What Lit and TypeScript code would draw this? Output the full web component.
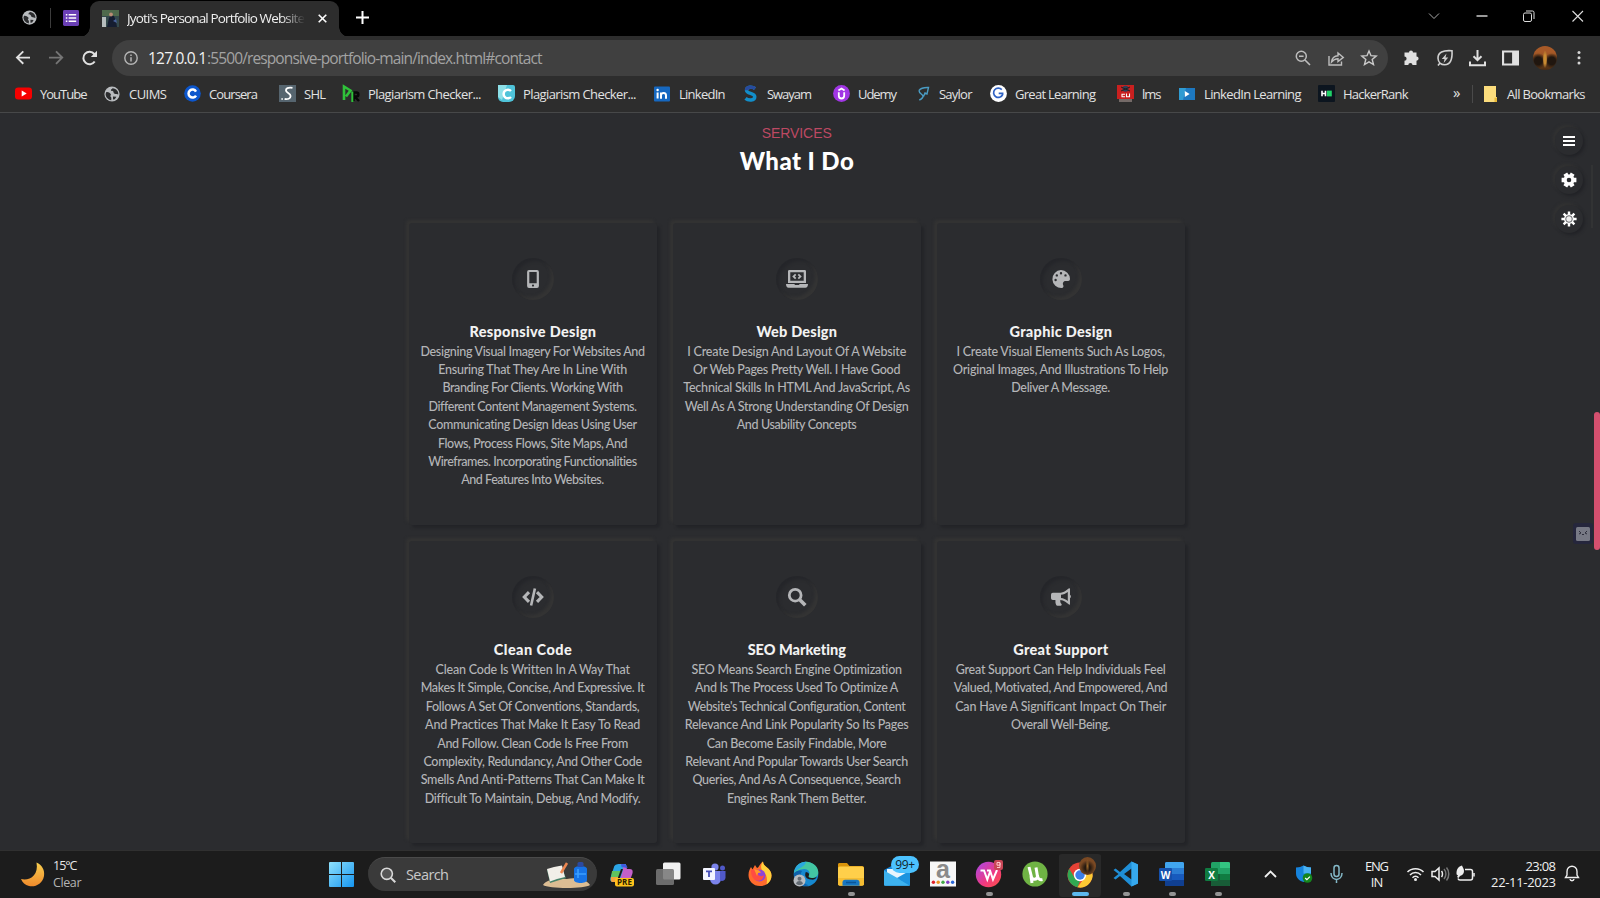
import { LitElement, html, css, svg, TemplateResult } from "lit";
import { customElement, property } from "lit/decorators.js";

/* Text whose tracking is adjusted so that it fills a given width. */
@customElement("fit-text")
class FitText extends LitElement {
  @property() text = "";
  @property({ type: Number }) w = 0;
  static styles = css`
    :host { display: inline-block; white-space: pre; flex: none; }
    .t { display: inline-block; }
  `;
  updated() {
    const el = this.renderRoot.querySelector(".t") as HTMLElement;
    el.style.letterSpacing = "0";
    const natural = el.getBoundingClientRect().width;
    const step = (this.w - natural) / Math.max(1, this.text.length - 1);
    el.style.letterSpacing = step + "px";
    el.style.marginRight = -step + "px";
  }
  render() {
    return html`<span class="t">${this.text}</span>`;
  }
}

const ic = (size: number, box: number, body: unknown, h = size) =>
  html`<svg width=${size} height=${h} viewBox="0 0 ${box} ${box}" preserveAspectRatio="none">${body}</svg>`;

const globe = svg`<circle cx="8" cy="8" r="7.6" fill="#b9bcbf"/><path d="M2.2 6.2c2-.5 3.2.6 4.3 1.6 1 .9.2 1.6-.3 2.3l1.2 1.6-.2 2.6C4 13.700 1.600 11 1.600 8zM8.600 2.200C7.600 3.200 6.700 3.400 7 4.600c.9 1 2.400.1 2.500 1.600.2 1.500 1.700 1.800 3.100 1.800l1.700.5c.3-3-1.900-6-5.700-6.300zM9 10.400l3.400.3-1.600 2.500-1.800.4z" fill="#2b2c2e"/>`;

const bookmarks: [string, number, number, TemplateResult][] = [
  ["YouTube", 89, 47.5, ic(17, 17, svg`<rect y="2.500" width="17" height="12" rx="3.200" fill="#f60000"/><path d="M6.700 5.600v5.800l5-2.900z" fill="#fff"/>`)],
  ["CUIMS", 80, 38, ic(16, 16, globe)],
  ["Coursera", 95, 49, ic(17, 17, svg`<circle cx="8.500" cy="8.500" r="8.300" fill="#0c56cc"/><path d="M12 6.500a4 4 0 1 0 0 4" fill="none" stroke="#fff" stroke-width="2.500"/>`)],
  ["SHL", 64, 22, ic(17, 17, svg`<rect width="17" height="17" fill="#56656f"/><path d="M13.500 2.800C9 2 6.500 3.500 7 5.800c.5 2.200 4.600 2.300 4.600 5.200 0 2.800-3 3.500-6 3M2.500 14h1.200" fill="none" stroke="#fff" stroke-width="1.800"/>`)],
  ["Plagiarism Checker...", 155, 113.5, ic(17, 17, svg`<path d="M1 15V1.500L7.500 5.500 3 11.500" fill="none" stroke="#2fc23a" stroke-width="2.600"/><path d="M10.500 16V7.500h3c2.500 0 2.500 4 0 4h-2l4.500 4.500" fill="none" stroke="#080808" stroke-width="2.400"/><path d="M9.300 6.500V17" stroke="#2fc23a" stroke-width="2"/>`)],
  ["Plagiarism Checker...", 156, 113.5, ic(17, 17, svg`<path d="M2 0h13a2 2 0 0 1 2 2v9a6 6 0 0 1-6 6H5a5 5 0 0 1-5-5V2a2 2 0 0 1 2-2z" fill="#4fc3d9"/><path d="M0 0h9L4 15 0 12z" fill="#8de0e8"/><path d="M13 6A4.300 4.300 0 1 0 13 12" fill="none" stroke="#fff" stroke-width="2.500"/>`)],
  ["LinkedIn", 88, 46.5, ic(16, 16, svg`<rect y=".5" width="16" height="15" rx="1" fill="#1668c0"/><path d="M3.600 6.500v6M7 12.700V6.500M7 9c.5-2.500 5-2.800 5 .5v3.200" fill="none" stroke="#fff" stroke-width="2"/><circle cx="3.600" cy="4" r="1.200" fill="#fff"/>`)],
  ["Swayam", 91, 45, ic(17, 17, svg`<path d="M13 3.600C10.500 1.500 4.500 1.500 4.500 5.200c0 4 8.300 2.500 8.300 6.600 0 4-6.500 4-9.300 1.600" fill="none" stroke="#128ec9" stroke-width="3.400"/><path d="M13 3.600C10.500 1.500 4.500 1.500 4.500 5.200" fill="none" stroke="#284a9c" stroke-width="3.400"/>`)],
  ["Udemy", 81, 39, ic(17, 17, svg`<circle cx="8.500" cy="8.500" r="8.400" fill="#a136e4"/><path d="M5.800 7.200v3.600c0 3.600 5.400 3.600 5.400 0V7.200M5.400 5.400l3.100-1.900 3.100 1.900" fill="none" stroke="#fff" stroke-width="1.800"/>`)],
  ["Saylor", 76, 33.5, ic(17, 17, svg`<path d="M5 5.500c2-2.700 5-3.200 9.500-3L13 9l-2-1-1.500 3.500M5 5.500c0 3 3.500 3.500 4 5.500.3 2-2.200 3.300-3.700 4" fill="none" stroke="#4a9cc4" stroke-width="1.400"/>`)],
  ["Great Learning", 127, 81, ic(17, 17, svg`<circle cx="8.500" cy="8.500" r="8.400" fill="#fff"/><path d="M11.800 4.600a4.700 4.700 0 1 0 .8 5V8.300H8.700" fill="none" stroke="#2f62c4" stroke-width="1.700"/>`)],
  ["lms", 62, 19.5, ic(17, 17, svg`<rect width="17" height="14" fill="#c9201f"/><rect y="14" x="2" width="13" height="3" fill="#746a67"/><circle cx="8.500" cy="3.800" r="3" fill="#32405a"/><path d="M4 2l9 4M13 2L4 6" stroke="#222" stroke-width="1"/><path d="M8 9.200H5v2.600h3M9.500 8.600v3.200h3V8.600" fill="none" stroke="#fff" stroke-width="1.100"/>`)],
  ["LinkedIn Learning", 139, 97.5, ic(16, 16, svg`<rect y="2" width="16" height="12" fill="#1d78c0"/><path d="M0 2h7L4 14H0z" fill="#2f9bd2"/><path d="M5.800 5v6l4.800-3z" fill="#fff"/>`)],
  ["HackerRank", 132, 65.500, ic(17, 17, svg`<rect width="17" height="17" rx="1" fill="#0c151f"/><path d="M4 5.800v5.400M7.500 5.800v5.400M4 8.500h3.500" stroke="#fff" stroke-width="1.600"/><rect x="9" y="5.600" width="4.800" height="5.800" fill="#1fd267"/>`)],
];

const phone = svg`<path fill-rule="evenodd" d="M6 1h8a1.900 1.900 0 0 1 1.900 1.900v14.200A1.900 1.900 0 0 1 14 19H6a1.900 1.900 0 0 1-1.900-1.900V2.900A1.900 1.900 0 0 1 6 1zm.3 1.900v11.300h7.400V2.900zM10 15.500a1.100 1.100 0 1 0 0 2.200 1.100 1.100 0 0 0 0-2.200z"/>`;
const laptop = svg`<path fill-rule="evenodd" d="M3.300 1h15.400c.8 0 1.300.6 1.300 1.300V14H2V2.300C2 1.600 2.500 1 3.300 1zm1 2.200v8.600h13.400V3.200z"/><path d="M0 15h8.500c0 .8.500 1 1 1h3c.5 0 1-.2 1-1H22c0 2.300-1 3.700-2.600 3.700H2.600C1 18.700 0 17.300 0 15z"/><path d="M9.700 5.300 7.500 7.500l2.200 2.200M12.300 5.300l2.200 2.200-2.200 2.200" fill="none" stroke="#b5b6b8" stroke-width="1.800"/>`;
const palette = svg`<path fill-rule="evenodd" d="M10 1a9 9 0 1 0 .8 18c1.600-.2 2-1.700 1.400-3-.9-1.900.4-4 2.500-4h2.500c1 0 1.800-.8 1.800-2A9.200 9.200 0 0 0 10 1zM4.600 9.800a1.200 1.200 0 1 1 0 2.400 1.200 1.200 0 0 1 0-2.400zM5.800 5.200a1.200 1.200 0 1 1 0 2.400 1.200 1.200 0 0 1 0-2.400zM10 3a1.200 1.200 0 1 1 0 2.400A1.200 1.200 0 0 1 10 3zm4.500 2.200a1.200 1.200 0 1 1 0 2.400 1.200 1.200 0 0 1 0-2.400z"/>`;
const code = svg`<path d="M7 5.200 2.300 10 7 14.800M15 5.200l4.700 4.800-4.700 4.800" fill="none" stroke="#b5b6b8" stroke-width="3.100"/><path d="M12.900 1.500 9.100 18.500" stroke="#b5b6b8" stroke-width="2.600"/>`;
const lens = svg`<circle cx="8.200" cy="8.200" r="5.900" fill="none" stroke="#b5b6b8" stroke-width="2.800"/><path d="m12.500 12.500 5.800 5.800" stroke="#b5b6b8" stroke-width="3.600"/>`;
const horn = svg`<path fill-rule="evenodd" d="M19 1.200c.6-.2 1 0 1 .7v5.800c1.200.6 1.200 2.900 0 3.500v5.900c0 .7-.4.900-1 .5l-3.700-2.900a10 10 0 0 0-5-1.700c-.2 2 .3 3.200 1.200 4.100.5.700.1 1.700-.8 1.700H7.400c-.6 0-1-.2-1.200-.7A11 11 0 0 1 5.400 13H2.800A1.900 1.900 0 0 1 1 11.200V7.700a1.900 1.900 0 0 1 1.800-1.900H9c2.600 0 4.700-.6 6.300-1.800zM17.800 5c-2.200 1.700-4.400 2.500-6.800 2.800v3.300c2.400.3 4.600 1.200 6.800 2.900z"/>`;

type Line = [string, number];
const services: { title: Line; icon: unknown; wide: number; lines: Line[] }[] = [
  { title: ["Responsive Design", 126.5], icon: phone, wide: 20, lines: [["Designing Visual Imagery For Websites And", 224.5], ["Ensuring That They Are In Line With", 189], ["Branding For Clients. Working With", 180.5], ["Different Content Management Systems.", 208], ["Communicating Design Ideas Using User", 209], ["Flows, Process Flows, Site Maps, And", 189.5], ["Wireframes. Incorporating Functionalities", 209.5], ["And Features Into Websites.", 143]] },
  { title: ["Web Design", 80.5], icon: laptop, wide: 22, lines: [["I Create Design And Layout Of A Website", 219], ["Or Web Pages Pretty Well. I Have Good", 207], ["Technical Skills In HTML And JavaScript, As", 227], ["Well As A Strong Understanding Of Design", 224], ["And Usability Concepts", 120]] },
  { title: ["Graphic Design", 102.5], icon: palette, wide: 20, lines: [["I Create Visual Elements Such As Logos,", 208.5], ["Original Images, And Illustrations To Help", 215.5], ["Deliver A Message.", 99]] },
  { title: ["Clean Code", 78], icon: code, wide: 22, lines: [["Clean Code Is Written In A Way That", 194], ["Makes It Simple, Concise, And Expressive. It", 224], ["Follows A Set Of Conventions, Standards,", 214], ["And Practices That Make It Easy To Read", 215.5], ["And Follow. Clean Code Is Free From", 191], ["Complexity, Redundancy, And Other Code", 218.5], ["Smells And Anti-Patterns That Can Make It", 224], ["Difficult To Maintain, Debug, And Modify.", 215.5]] },
  { title: ["SEO Marketing", 98.5], icon: lens, wide: 20, lines: [["SEO Means Search Engine Optimization", 211], ["And Is The Process Used To Optimize A", 203.5], ["Website's Technical Configuration, Content", 218], ["Relevance And Link Popularity So Its Pages", 224], ["Can Become Easily Findable, More", 180], ["Relevant And Popular Towards User Search", 223], ["Queries, And As A Consequence, Search", 208.5], ["Engines Rank Them Better.", 139]] },
  { title: ["Great Support", 95], icon: horn, wide: 21, lines: [["Great Support Can Help Individuals Feel", 210], ["Valued, Motivated, And Empowered, And", 214], ["Can Have A Significant Impact On Their", 211], ["Overall Well-Being.", 99.5]] },
];

/* Cog outline with n teeth, r1 at the root and r2 at the tip. */
const gearPath = (n: number, r1: number, r2: number, a: number) => {
  let d = "";
  for (let i = 0; i < n; i++) {
    const t = (i * 2 * Math.PI) / n - Math.PI / 2 + (n === 6 ? Math.PI / 6 : 0);
    const p = (r: number, x: number) => `${(8 + r * Math.cos(t + x)).toFixed(2)} ${(8 + r * Math.sin(t + x)).toFixed(2)}`;
    d += `${i ? "L" : "M"}${p(r1, -a * 1.5)}L${p(r2, -a)}L${p(r2, a)}L${p(r1, a * 1.5)}`;
  }
  return d + "Z";
};

const apps: { icon: TemplateResult; mark?: string; active?: boolean }[] = [
  { icon: html`<svg width="26" height="26" viewBox="0 0 26 26"><path d="M11 3h6l-4 14c-.8 2.800-2 4-5 4H4c-3 0-3-3-2.300-5L5 6c.7-2 2-3 6-3z" fill="#2ba5e6"/><path d="M3 10h9l-2 7H2z" fill="#62c25d"/><path d="M14 3c3 0 3 2 4 5h3c3 0 3 3 2.300 5L21 19H11l3-10c.7-3-1-6-4-6z" fill="#c360c9"/><path d="M12 3h3c2 0 3 2 3.500 4l-6-1z" fill="#3c5be0"/><path d="M12 8h2l-3.500 10H8.500z" fill="#1c1c1c"/><path d="M2 16h7l-1 5H4c-2.500 0-2.500-2-2-5z" fill="#f3a33e"/><rect x="6" y="17" width="19" height="8.500" rx="2" fill="#ffc31b"/><text x="15.500" y="24.300" text-anchor="middle" class="pre">PRE</text></svg>` },
  { icon: html`<svg width="26" height="26" viewBox="0 0 26 26"><rect x="8" y="1.500" width="17.500" height="17" rx="1.500" fill="#f1f1f1"/><rect x="1" y="8" width="18" height="16" rx="1.500" fill="#777" fill-opacity=".88"/></svg>` },
  { icon: html`<svg width="24" height="24" viewBox="0 0 24 24"><circle cx="13" cy="5" r="3.600" fill="#7b83eb"/><circle cx="20.500" cy="6" r="2.500" fill="#5059c9"/><path d="M8 9h11v8a5.500 5.500 0 0 1-11 0z" fill="#7b83eb"/><path d="M18 9h5.500v6.500c0 3-3 4-5.500 3z" fill="#5059c9"/><rect x="1" y="6" width="12" height="12" rx="1" fill="#f4f5ff"/><path d="M4 9.300h6M7 9.300V15" stroke="#464eb8" stroke-width="1.800"/></svg>` },
  { icon: html`<svg width="26" height="26" viewBox="0 0 26 26"><path d="M13 25C6 25 1.500 20 1.500 14c0-4 1.500-6 2.500-8l1.500 2.500L8 4l2 3c2 0 3-5 6-6.500 0 3 2 4 4 6 2.500 2 4.500 4.500 4.500 8C24.500 20.500 19.500 25 13 25z" fill="#ff6b2d"/><path d="M16 .5c0 3 2 4 4 6 2.500 2 4.500 4.500 4.500 8 0 4-2 7-5 9 1-6 .5-10-3.500-13-2-2-3-6 0-10z" fill="#ffd13b"/><circle cx="12.500" cy="14.500" r="6" fill="#8d45d8"/><path d="M4 9c4-2 8 0 10 2-3 0-4 2-2 3.500 2 1.200 4 .5 5-.5-.5 4-3.500 6.500-7 5.500C5.500 18.500 4 14 4 9z" fill="#ff4d42"/><path d="M7 8l5 1.500 2 2-3 .5-1 3z" fill="#ff9b28"/></svg>` },
  { icon: html`<svg width="26" height="26" viewBox="0 0 26 26"><circle cx="13" cy="13" r="12.300" fill="#1688cf"/><path d="M1 12C2 4 8 .7 13 .7 20 .7 25.300 6 25.300 11c0 4-3 6-6.500 6-3 0-3.800-1.300-3-2.500C18 11 15 8 11.500 8 6 8 3 11 1 12z" fill="#43c6a2"/><path d="M1 12C2 4 8 .7 13 .7c-1 6-9 6-12 11.300z" fill="#2aa8df"/><path d="M15.800 14.500c-.8 1.200 0 2.500 3 2.500 2 0 4-.7 5-1.600-1 3-3 3.500-6 3.200-4-.5-7-3-5-7.600 2.500.2 4 2 3 3.500z" fill="#1c1c1c"/><path d="M9 10c-3 4-1 12 7 14.500-9 2.500-16-5-15-12C3 10 6 9 9 10z" fill="#0d62ac"/><circle cx="6.500" cy="19.500" r="6" fill="#b7bbc0"/><circle cx="6.500" cy="17.700" r="2" fill="#626a72"/><path d="M3 22.500c1-3.300 6-3.300 7 0-2 2-5 2-7 0z" fill="#626a72"/></svg>` },
  { mark: "dot", icon: html`<svg width="26" height="26" viewBox="0 0 26 26"><path d="M0 3.500C0 2.500.7 2 1.500 2H9l2.500 3H24c1.300 0 2 .7 2 2v4H0z" fill="#d9940b"/><rect y="5.500" width="26" height="19" rx="1.800" fill="#ffcf4a"/><path d="M0 17h26v6c0 1-.8 1.700-1.800 1.700H1.800C.8 24.700 0 24 0 23z" fill="#f6bd32"/><path d="M4.500 24.700v-3.500c0-1.500 1-2.500 2.500-2.500h12c1.500 0 2.500 1 2.500 2.500v3.500z" fill="#1777c2"/><path d="M8 21.500h10" stroke="#0b5596" stroke-width="1.500"/></svg>` },
  { icon: html`<span class="mail"><svg width="26" height="26" viewBox="0 0 26 26"><path d="M0 9l13-7 13 7v14.500c0 .8-.7 1.300-1.500 1.300h-23C.7 24.800 0 24.300 0 23.500z" fill="#1783d4"/><path d="M3 8h20v7L13 20 3 15z" fill="#e8f5fd"/><path d="M0 9.500 26 24c-.2.500-.8.800-1.500.8h-23C.7 24.800 0 24.300 0 23.500z" fill="#3db2ef"/><path d="M26 9.500 13 17l12.500 7.500c.3-.2.500-.600.5-1z" fill="#1c93df"/></svg><span class="badge"><fit-text text="99+" w="20"></fit-text></span></span>` },
  { icon: html`<svg width="26" height="26" viewBox="0 0 26 26"><rect y=".5" width="26" height="25" fill="#f7f7f7"/><text x="13" y="16.500" text-anchor="middle" class="avro">a</text><g><circle cx="3.400" cy="21.300" r="1.700" fill="#e2232b"/><circle cx="8.200" cy="21.300" r="1.700" fill="#f29420"/><circle cx="13" cy="21.300" r="1.700" fill="#42a747"/><circle cx="17.800" cy="21.300" r="1.700" fill="#813dc4"/><circle cx="22.600" cy="21.300" r="1.700" fill="#2866d8"/></g></svg>` },
  { mark: "dot", icon: html`<svg width="28" height="28" viewBox="0 0 28 28"><defs><linearGradient id="wp" x1="0" x2="1" y2="1"><stop offset="0" stop-color="#a748ec"/><stop offset=".6" stop-color="#f1397e"/><stop offset="1" stop-color="#ff5443"/></linearGradient></defs><circle cx="13.500" cy="14.500" r="12.700" fill="url(#wp)"/><path d="M5.500 10.500H9l3.300 9 3-8.500M12 10.500h3l3 9 4-9.500" fill="none" stroke="#fff" stroke-width="2"/><rect x="19" y="0" width="9" height="10" rx="2" fill="#c84656"/><path d="M22 2.500h3v2.700h-3zM25 3v4.500h-3" fill="none" stroke="#ffc7cb" stroke-width="1"/></svg>` },
  { icon: html`<svg width="26" height="26" viewBox="0 0 26 26"><circle cx="13" cy="13" r="12.600" fill="#6fb344"/><path d="M7 6l2.500 10c.6 3 5.500 3 6-.5L14 6.500M15.500 15c1 4 3 4 5 3.500M9 15l1 7" fill="none" stroke="#fff" stroke-width="3"/></svg>` },
  { mark: "bar", active: true, icon: html`<span class="mail"><svg width="26" height="26" viewBox="0 0 26 26"><circle cx="13" cy="13" r="12.500" fill="#e64236"/><path d="M2.200 6.800 8 16.500l5 2.500-2.500 6.200A12.500 12.500 0 0 1 2.200 6.800z" fill="#31a852"/><path d="M13 7h11a12.500 12.500 0 0 1-13.500 18.300L18 15z" fill="#fcc934"/><circle cx="13" cy="13" r="6.200" fill="#fff"/><circle cx="13" cy="13" r="4.700" fill="#3c7fe9"/></svg><span class="mini"></span></span>` },
  { mark: "dot", icon: html`<svg width="26" height="26" viewBox="0 0 26 26"><path d="M18.500.5 25 3.500v19l-6.500 3L7 15l-4.500 3.500L.5 17l5-4-5-4 2-1.500L7 11zM18.500 7.500 11 13l7.500 5.500z" fill="#1f8ed6" fill-rule="evenodd"/><path d="M18.500.5 25 3.500v19l-6.500 3z" fill="#36a9ee"/></svg>` },
  { mark: "dot", icon: html`<svg width="26" height="26" viewBox="0 0 26 26"><rect x="6" y="1" width="19" height="24" rx="1.500" fill="#185abd"/><path d="M6 2.500A1.500 1.500 0 0 1 7.500 1h16A1.500 1.500 0 0 1 25 2.500V7H6z" fill="#41a5ee"/><path d="M6 7h19v6H6z" fill="#2b7cd3"/><path d="M6 19h19v4.500a1.500 1.500 0 0 1-1.500 1.500h-16A1.500 1.500 0 0 1 6 23.500z" fill="#103f91"/><rect y="7" width="13" height="13" rx="1.300" fill="#1550ac"/><text x="6.500" y="17.500" text-anchor="middle" class="office">W</text></svg>` },
  { mark: "dot", icon: html`<svg width="26" height="26" viewBox="0 0 26 26"><rect x="6" y="1" width="19" height="24" rx="1.500" fill="#21a366"/><path d="M15 1h8.500A1.500 1.500 0 0 1 25 2.500V7H15z" fill="#33c481"/><path d="M6 13h9v12H7.500A1.500 1.500 0 0 1 6 23.500zM15 19h10v4.500a1.500 1.500 0 0 1-1.500 1.500H15z" fill="#185c37"/><path d="M15 13h10v6H15z" fill="#107c41"/><rect y="7" width="13" height="13" rx="1.300" fill="#107c41"/><text x="6.500" y="17.500" text-anchor="middle" class="office">X</text></svg>` },
];

@customElement("app-root")
class AppRoot extends LitElement {
  static styles = css`
    :host { display: flex; flex-direction: column; width: 1600px; height: 898px; overflow: hidden; position: relative; background: #2b2c2f; color: #e6e6e6; font-family: "Open Sans", "Noto Sans", sans-serif; }
    * { box-sizing: border-box; }
    svg { display: block; flex: none; overflow: visible; }
    .strip { height: 36px; flex: none; background: #000; display: flex; align-items: center; padding-bottom: 1px; }
    .pin { display: flex; align-items: center; padding-left: 21.500px; width: 90px; }
    .sep { width: 1px; height: 20px; background: #3c3c3c; margin: 0 12px 0 13px; }
    .tab { width: 249px; height: 36px; background: #2d2d2d; border-radius: 9px 9px 0 0; display: flex; align-items: center; padding: 0 0 1px 12px; position: relative; top: 1px; font-size: 13.5px; color: #f0f0f0; }
    .tab::before, .tab::after { content: ""; position: absolute; bottom: 0; width: 10px; height: 10px; }
    .tab::before { left: -10px; background: radial-gradient(circle at 0 0, transparent 9.500px, #2d2d2d 10px); }
    .tab::after { right: -10px; background: radial-gradient(circle at 100% 0, transparent 9.500px, #2d2d2d 10px); }
    .cap { margin-left: 8px; width: 178px; overflow: hidden; white-space: nowrap; -webkit-mask-image: linear-gradient(90deg, #000 87%, transparent 100%); }
    .close { margin-left: 13px; }
    .plus { margin-left: 17px; }
    .win { margin-left: auto; display: flex; align-items: center; padding: 0 17.500px 4px 0; }
    .bar { height: 44px; flex: none; background: #2d2d2d; display: flex; align-items: center; padding-left: 15px; }
    .nav { display: flex; gap: 17px; width: 97px; }
    .omni { width: 1276px; height: 36px; border-radius: 18px; background: #404040; display: flex; align-items: center; padding: 0 10px 0 12px; font-size: 15.5px; color: #a3a3a3; }
    .url { display: flex; margin-left: 10px; flex: 1; }
    .host { color: #f2f2f2; }
    .acts { display: flex; gap: 15px; align-items: center; }
    .ext { display: flex; align-items: center; margin-left: 14px; gap: 15.500px; }
    .face { width: 24px; height: 24px; border-radius: 50%; margin: 0 -2.500px 0 -1.500px; background: radial-gradient(ellipse 2.500px 9px at 50% 55%, #c98b32 0 50%, transparent 100%), radial-gradient(circle at 22% 62%, #20160f 0 16%, transparent 32%), radial-gradient(circle at 78% 62%, #20160f 0 16%, transparent 32%), linear-gradient(#a85a28 25%, #7a461d 60%, #4b2d14); }
    .marks { height: 33px; flex: none; background: #2d2d2d; border-bottom: 1px solid #474849; display: flex; align-items: center; padding: 0 0 5px 15px; font-size: 13px; color: #e2e2e2; }
    .mark { display: flex; align-items: center; flex: none; }
    .mi { width: 25px; flex: none; }
    .more { width: 22px; padding-left: 3px; font-size: 15px; line-height: 14px; margin-top: -4px; }
    .vs { width: 1px; height: 18px; background: #4a4a4a; margin-right: 11px; }
    .folder { width: 23px; }
    .page { height: 737px; flex: none; display: flex; flex-direction: column; align-items: center; background: #2b2c2f; padding-right: 6.500px; overflow: hidden; }
    .eyebrow { margin-top: 12px; height: 17px; font: 14px/17px "Liberation Sans", sans-serif; color: #bd4963; }
    .h { height: 34px; font: 900 24px/38px Lato, sans-serif; color: #fff; margin-bottom: 46.500px; }
    .grid { display: grid; grid-template-columns: repeat(3, 248px); grid-auto-rows: 302px; gap: 16.500px 16px; }
    .card { border-radius: 3px; padding-top: 35px; display: flex; flex-direction: column; align-items: center; box-shadow: 3px 3px 3px #232428, -3px -3px 3px #333; background: #2b2c2f; }
    .ring { width: 42px; height: 42px; border-radius: 50%; display: grid; place-items: center; box-shadow: inset 3px 3px 3px #25262a, inset -3px -3px 3px #343434; fill: #b5b6b8; }
    .title { margin-top: 22px; height: 21px; font: 900 14.500px/20px Lato, sans-serif; color: #f2f2f2; }
    .desc { font: 500 12.500px/18.400px Lato, sans-serif; color: #b4b5b7; display: flex; flex-direction: column; align-items: center; }
    .side { position: absolute; right: 17px; top: 127px; display: flex; flex-direction: column; gap: 11px; }
    .btn { width: 28px; height: 28px; border-radius: 50%; display: grid; place-items: center; background: #2b2c2f; box-shadow: 2px 2px 3px #222327, -2px -2px 3px #323232; }
    .line { position: absolute; left: 1591px; top: 165px; width: 2px; height: 63px; background: #323334; }
    .thumb { position: absolute; right: 0; top: 412px; width: 6px; height: 138px; border-radius: 3px; background: #d5506f; }
    .widget { position: absolute; left: 1573px; top: 523px; width: 20px; height: 21px; border-radius: 3px; background: #25263c; display: grid; place-items: center; }
    .task { height: 48px; flex: none; background: #1c1c1c; border-top: 1px solid #303030; display: flex; align-items: center; padding-bottom: 1px; }
    .weather { width: 307px; padding-left: 21px; display: flex; align-items: center; gap: 8px; font-size: 12.500px; line-height: 17px; flex: none; }
    .two { display: flex; flex-direction: column; }
    .dim { color: #b4b4b4; }
    .start { margin-left: 22px; width: 39px; }
    .search { width: 229px; height: 34px; border-radius: 17px; background: #3a3a3a; border-top: 1px solid #4a4a4a; display: flex; align-items: center; padding: 0 7px 0 12px; font-size: 14.500px; color: #c9c9c9; flex: none; }
    .search fit-text { margin: 0 auto 0 10px; }
    .apps { display: flex; margin-left: 2.500px; }
    .app { width: 45.800px; height: 47px; display: grid; place-items: center; position: relative; }
    .app.on { background: #292929; background-clip: content-box; padding: 3px 2px 1px; border-radius: 5px; }
    .dot, .bar2 { position: absolute; bottom: 2px; left: 20px; width: 7px; height: 3.500px; border-radius: 2px; background: #949494; }
    .bar2 { width: 17px; left: 14.500px; background: #5cb8ee; }
    .mail { position: relative; display: block; }
    .badge { position: absolute; left: 7px; top: -5px; width: 28px; height: 17px; border-radius: 9px; background: #4cc2ff; color: #10222e; font-size: 12px; line-height: 17px; text-align: center; }
    .mini { position: absolute; left: 12px; top: -5px; width: 17px; height: 18px; border-radius: 50%; background: radial-gradient(ellipse 2px 7px at 50% 50%, #a06a2a, transparent), radial-gradient(circle at 50% 60%, #251910 0 20%, transparent 55%), #7b4923; }
    .pre { font: 700 8px "Open Sans", sans-serif; fill: #2a2100; }
    .avro { font: 700 25px "Liberation Sans", sans-serif; fill: #8a8a8a; }
    .office { font: 700 10px "Open Sans", sans-serif; fill: #fff; }
    .tray { margin-left: auto; display: flex; align-items: center; padding-right: 20px; font-size: 13px; line-height: 16.500px; color: #f0f0f0; }
    .lang { align-items: center; width: 24px; margin: 0 17px 0 15px; }
    .clock { align-items: flex-end; margin: 0 8px 0 17px; width: 65px; }
  `;

  render() {
    return html`
      <div class="strip">
        <div class="pin">
          ${ic(15, 16, globe)}<span class="sep"></span>
          ${ic(16, 17, svg`<rect width="17" height="17" rx="1.500" fill="#6a3fb5"/><path d="M6 5h8M6 8.500h8M6 12h8" stroke="#fff" stroke-width="1.600"/><path d="M3 5h1.600M3 8.500h1.600M3 12h1.600" stroke="#fff" stroke-width="1.600"/>`)}
        </div>
        <div class="tab">
          ${ic(17, 17, svg`<rect width="17" height="17" fill="#34494c"/><path d="M0 0h17v6H0z" fill="#4f6a4c"/><path d="M0 7h4v10H0z" fill="#b6bdbd"/><path d="M5 17l2-9 2-3 3 1 2 5 1 6z" fill="#151d31"/><circle cx="9" cy="4.500" r="1.900" fill="#b98c74"/><path d="M11 11l3-2 1 4z" fill="#48619a"/>`)}
          <span class="cap"><fit-text text="Jyoti's Personal Portfolio Website" w="178"></fit-text></span>
          <span class="close">${ic(9, 9, svg`<path d="M.7.7l7.600 7.600M8.300.7.7 8.300" stroke="#fff" stroke-width="1.600"/>`)}</span>
        </div>
        <span class="plus">${ic(13, 13, svg`<path d="M6.500 0v13M0 6.500h13" stroke="#fff" stroke-width="2"/>`)}</span>
        <div class="win">
          <svg width="160" height="12" viewBox="0 0 160 12"><path d="M6 3.500l5 5 5-5" fill="none" stroke="#aaa" stroke-width="1"/><path d="M53.500 6h11" stroke="#fff" stroke-width="1.200"/><rect x="100.500" y="3" width="8" height="8.500" rx="1.500" fill="none" stroke="#ddd"/><path d="M103 1h6.500A1.500 1.500 0 0 1 111 2.500V9" fill="none" stroke="#ddd"/><path d="M149.500 1l10.500 10.500M160 1l-10.500 10.500" stroke="#ddd" stroke-width="1.100"/></svg>
        </div>
      </div>

      <div class="bar">
        <div class="nav">
          ${ic(16, 16, svg`<path d="M15 7.600H2.200M8.300 1.400 2 7.600l6.300 6.200" fill="none" stroke="#e0e0e0" stroke-width="1.900"/>`)}
          ${ic(16, 16, svg`<path d="M1 7.600h13M8 1.400l6.200 6.200L8 13.800" fill="none" stroke="#757575" stroke-width="1.900"/>`)}
          ${ic(16, 16, svg`<path d="M13.700 11.500A6.200 6.200 0 1 1 13.300 4l1.500 1.600" fill="none" stroke="#e0e0e0" stroke-width="2"/><path d="M16 .8v6.300H9.800z" fill="#e0e0e0"/>`)}
        </div>
        <div class="omni">
          ${ic(14, 14, svg`<circle cx="7" cy="7" r="6.200" fill="none" stroke="#b5b5b5" stroke-width="1.400"/><path d="M7 6.200v4.200M7 3.500v1.400" stroke="#b5b5b5" stroke-width="1.500"/>`)}
          <span class="url"><fit-text class="host" text="127.0.0.1" w="59"></fit-text><fit-text text=":5500/responsive-portfolio-main/index.html#contact" w="335.500"></fit-text></span>
          <span class="acts">
            ${ic(18, 18, svg`<circle cx="7.300" cy="7.300" r="5" fill="none" stroke="#bdbdbd" stroke-width="1.500"/><path d="M11 11l5 5M5 7.300h4.600" stroke="#bdbdbd" stroke-width="1.600"/>`)}
            ${ic(18, 18, svg`<path d="M2 7v9h12.500v-3.500M4.500 13c.5-4 3-6 6.500-6.200V4l5.300 4.400L11 12.500V9.700C8.500 9.700 6.500 10.500 4.500 13z" fill="none" stroke="#bdbdbd" stroke-width="1.400"/>`)}
            ${ic(18, 18, svg`<path d="M9 2l2 4.700 5.200.4-4 3.400 1.300 5L9 12.800l-4.500 2.700 1.300-5-4-3.400L7 6.700z" fill="none" stroke="#cacaca" stroke-width="1.400"/>`)}
          </span>
        </div>
        <div class="ext">
          ${ic(18, 18, svg`<path d="M7 3.500a2 2 0 0 1 4 0h3.500V7.500a2 2 0 0 1 0 4.200V16h-4a2 2 0 0 0-4.200 0H2.500v-4.200a2 2 0 0 0 0-4.200V3.500z" fill="#e0e0e0"/>`)}
          ${ic(18, 18, svg`<path d="M16 1.800C7 1 1.800 3.500 2 9.300c.2 4 3 6.500 6.700 6.500C14.500 15.800 16.500 10 16 1.800zM4 14l-2 2.500" fill="none" stroke="#d0d0d0" stroke-width="1.600"/><path d="M10.500 4.500 5.800 10h2.700l-.8 4 4.500-5.500H9.500z" fill="#d0d0d0"/>`)}
          ${ic(17, 17, svg`<path d="M8.500 0v9.500M4.500 6.200l4 4 4-4M1 11.500v3.800h15v-3.800" fill="none" stroke="#e0e0e0" stroke-width="2"/>`)}
          ${ic(17, 16, svg`<rect x="1" y="1.500" width="14" height="13" fill="none" stroke="#e0e0e0" stroke-width="2"/><path d="M9.500 1h6v14h-6z" fill="#e0e0e0"/>`, 16)}
          <span class="face"></span>
          <svg width="18" height="18" viewBox="0 0 18 18" fill="#d6d6d6"><circle cx="9" cy="3.500" r="1.500"/><circle cx="9" cy="8.800" r="1.500"/><circle cx="9" cy="14.100" r="1.500"/></svg>
        </div>
      </div>

      <div class="marks">
        ${bookmarks.map(([label, span, w, icon]) => html`<div class="mark" style="width:${span}px"><span class="mi">${icon}</span><fit-text text=${label} w=${w}></fit-text></div>`)}
        <span class="more">»</span><span class="vs"></span>
        <span class="folder">${ic(13, 13, svg`<path d="M0 0h12v9h1v4H0z" fill="#fbdc7c"/><path d="M10.500 13v-3.500H13V13z" fill="#e8b837"/>`, 16)}</span>
        <fit-text text="All Bookmarks" w="78.500"></fit-text>
      </div>

      <div class="page">
        <div class="eyebrow"><fit-text text="SERVICES" w="70"></fit-text></div>
        <div class="h"><fit-text text="What I Do" w="114"></fit-text></div>
        <div class="grid">
          ${services.map((s) => html`<div class="card">
            <div class="ring"><svg width=${s.wide} height="20" viewBox="0 0 ${s.wide} 20">${s.icon}</svg></div>
            <div class="title"><fit-text text=${s.title[0]} w=${s.title[1]}></fit-text></div>
            <div class="desc">${s.lines.map(([t, w]) => html`<fit-text text=${t} w=${w}></fit-text>`)}</div>
          </div>`)}
        </div>
      </div>

      <div class="task">
        <div class="weather">
          <svg width="24" height="25" viewBox="0 0 24 25"><defs><linearGradient id="mn" x2="0" y2="1"><stop offset="0" stop-color="#f8cf4f"/><stop offset="1" stop-color="#f08a2c"/></linearGradient></defs><path d="M15.500.5C21 3 24 8 23 14c-1.500 8-9 11.500-15 10-4-1-6.500-3.500-8-7 8 2 18-3 15.500-16.500z" fill="url(#mn)"/></svg>
          <span class="two"><fit-text text="15°C" w="24.500"></fit-text><fit-text class="dim" text="Clear" w="28.500"></fit-text></span>
        </div>
        <span class="start"><svg width="25" height="25" viewBox="0 0 25 25"><defs><linearGradient id="ws" x2="1" y2="1"><stop offset="0" stop-color="#8fe1fc"/><stop offset="1" stop-color="#1595f0"/></linearGradient></defs><path d="M1 0h11v12H0V1a1 1 0 0 1 1-1zM13 0h11a1 1 0 0 1 1 1v11H13zM0 13h12v12H1a1 1 0 0 1-1-1zM13 13h12v11a1 1 0 0 1-1 1H13z" fill="url(#ws)"/></svg></span>
        <div class="search">
          ${ic(16, 16, svg`<circle cx="6.800" cy="6.800" r="5.600" fill="#555" stroke="#d8d8d8" stroke-width="1.600"/><path d="m10.800 10.800 4.500 4.500" stroke="#d8d8d8" stroke-width="2"/>`)}
          <fit-text text="Search" w="43"></fit-text>
          <svg width="47" height="28" viewBox="0 0 47 28"><path d="M0 24c3-5 12-7 24-6 10-2 20 1 23 6-5 4-41 4-47 0z" fill="#dcbd93"/><path d="M4 9l14-4 5 12L7 22z" fill="#47836a"/><path d="M4 8l7-2 3 12-7 2.500zM11 6l8-1.500L22 16l-8 2z" fill="#f2efe9"/><path d="M24 2l-6 10" stroke="#ed8750" stroke-width="2.500"/><path d="M31 8c0-4 13-4 13 0v11c0 4-13 4-13 0z" fill="#1673e6"/><rect x="34.500" y="1" width="6" height="5" rx="1.500" fill="#2b4aa1"/><path d="M32 13h11M35 8v9" stroke="#3ba0ff" stroke-width="1.600"/></svg>
        </div>
        <div class="apps">
          ${apps.map((a) => html`<div class="app ${a.active ? "on" : ""}">${a.icon}${a.mark ? html`<span class=${a.mark === "bar" ? "bar2" : "dot"}></span>` : ""}</div>`)}
        </div>
        <div class="tray">
          <svg width="90" height="22" viewBox="0 0 90 22"><path d="M5 14l5.500-5.500L16 14" fill="none" stroke="#f0f0f0" stroke-width="1.800"/><path d="M36 4.500c3.500 0 5-.7 7.500-2 2.500 1.300 4 2 7.500 2v6c0 5-4 7.500-7.500 8.500-3.500-1-7.500-3.500-7.500-8.500z" fill="#1683dc"/><path d="M43.500 2.500c2.500 1.300 4 2 7.500 2v6h-7.500z" fill="#49b2f2"/><circle cx="47.500" cy="15" r="4.800" fill="#15851d"/><path d="M45.200 15l1.700 1.700 3-3" fill="none" stroke="#fff" stroke-width="1.200"/><rect x="74" y="2.500" width="5" height="11" rx="2.500" fill="none" stroke="#84b9c8" stroke-width="1.500"/><path d="M71 10c0 8.500 11 8.500 11 0M76.500 16.500V20" fill="none" stroke="#84b9c8" stroke-width="1.500"/></svg>
          <div class="two lang"><fit-text text="ENG" w="24"></fit-text><fit-text text="IN" w="12.500"></fit-text></div>
          <svg width="68" height="20" viewBox="0 0 68 20"><g fill="none" stroke="#eee" stroke-width="1.500"><path d="M1.500 8c4-4.500 12-4.500 16 0M4 11c3-3.400 8-3.400 11 0M6.500 13.700c1.800-2 4.200-2 6 0"/><path d="M26 7.500h3l4-3.500v12l-4-3.500h-3z"/><path d="M35.500 7c1.300 1.500 1.300 4.500 0 6"/><path d="M38 5c2.500 2.700 2.500 7.300 0 10M40.500 3.500c3 3.500 3 9.500 0 13" stroke="#777"/><path d="M59 5.500h5.500a2 2 0 0 1 2 2v6.500a2 2 0 0 1-2 2H54a2 2 0 0 1-2-1.500"/><path d="M68 9v3.500"/></g><circle cx="9.500" cy="15.500" r="1.500" fill="#eee"/><path d="M50.500 9.500C50.500 5 52.500 2.500 56 1.500c.5 1.500 2 3 2 5.500s-1.500 4.500-4 5l-1.500 2-1.500-1 1-1.500c-1-.5-1.500-1-1.500-2z" fill="#eee"/></svg>
          <div class="two clock"><fit-text text="23:08" w="30.500"></fit-text><fit-text text="22-11-2023" w="65"></fit-text></div>
          <svg width="16" height="18" viewBox="0 0 16 18"><path d="M1.500 12.500h13L13 10V6.500C13 -.5 3 -.5 3 6.500V10zM6 14c.3 2.300 3.700 2.300 4 0" fill="none" stroke="#eee" stroke-width="1.400"/></svg>
        </div>
      </div>

      <div class="side">
        <div class="btn">${ic(12, 12, svg`<path d="M0 2h12M0 6h12M0 10h12" stroke="#fff" stroke-width="2.100"/>`)}</div>
        <div class="btn">${ic(16, 16, svg`<path d="${gearPath(6, 5.5, 7.7, 0.28)}M8 5.700a2.300 2.300 0 1 0 0 4.600 2.300 2.300 0 0 0 0-4.600z" fill="#fff" fill-rule="evenodd"/>`)}</div>
        <div class="btn">${ic(16, 16, svg`<path d="${gearPath(8, 5, 7.7, 0.16)}" fill="#fff"/><circle cx="8" cy="8" r="3.300" fill="#eee" stroke="#55565a" stroke-width=".9"/>`)}</div>
      </div>
      <span class="line"></span>
      <span class="widget"><svg width="14" height="14" viewBox="0 0 14 14"><rect width="14" height="14" rx="1.500" fill="#777985"/><path d="M3 4l2 2-2 1M11 4 9 6l2 1M6 7l1 1 1-1" fill="none" stroke="#2d2e3c"/></svg></span>
      <span class="thumb"></span>
    `;
  }
}
